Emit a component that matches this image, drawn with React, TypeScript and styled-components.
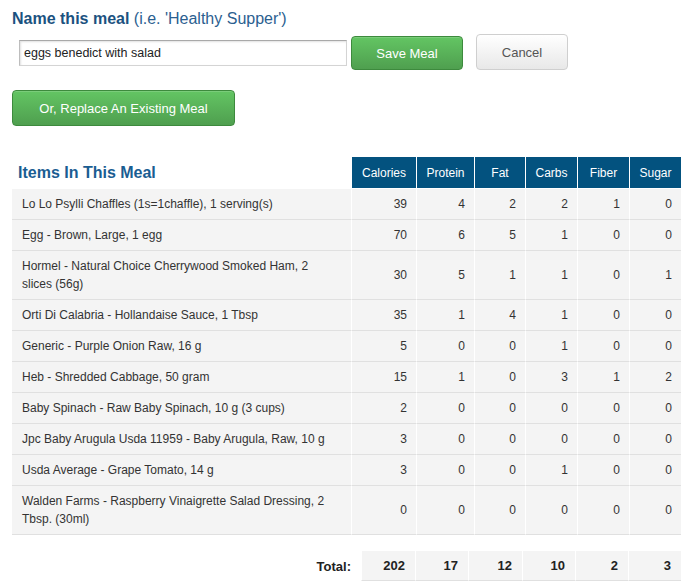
import React from "react";
import styled, { createGlobalStyle } from "styled-components";

const Global = createGlobalStyle`
  html, body { margin: 0; padding: 0; background: #fff; }
  body { font-family: "Liberation Sans", Arial, sans-serif; color: #333; }
`;

const Page = styled.div`
  padding: 9px 12px 0 12px;
  width: 669px;
`;

const Heading = styled.div`
  font-size: 16px;
  line-height: 20px;
  color: #1d5582;
`;

const Strong = styled.span`
  font-weight: bold;
  color: #1b5280;
`;

const Paren = styled.span`
  color: #2b6090;
`;

const FormRow = styled.div`
  display: flex;
  align-items: flex-end;
  margin-top: 5px;
  height: 36px;
`;

const NameInput = styled.input`
  box-sizing: border-box;
  width: 328px;
  height: 26px;
  margin: 0 4px 4px 7px;
  padding: 0 4px;
  border: 1px solid #d4d4d4;
  border-top-color: #a9a9a9;
  border-left-color: #bdbdbd;
  box-shadow: inset 1px 1px 2px rgba(0, 0, 0, 0.12);
  font-family: "Liberation Sans", Arial, sans-serif;
  font-size: 12.5px;
  color: #222;
  outline: none;
`;

const Button = styled.button<{ $variant: "green" | "plain"; $w: number; $h: number; $ml?: number }>`
  box-sizing: border-box;
  width: ${(p) => p.$w}px;
  height: ${(p) => p.$h}px;
  margin-left: ${(p) => p.$ml ?? 0}px;
  border-radius: 4px;
  font-family: "Liberation Sans", Arial, sans-serif;
  font-size: 13px;
  cursor: pointer;
  padding: 0;
  ${(p) =>
    p.$variant === "green"
      ? `
    color: #fff;
    background: linear-gradient(to bottom, #63c563, #4f9f4f);
    border: 1px solid #3d8a3d;
    box-shadow: inset 0 1px 0 rgba(255,255,255,0.15);
  `
      : `
    color: #555;
    background: linear-gradient(to bottom, #ffffff, #e8e8e8);
    border: 1px solid #cfcfcf;
  `}
`;

const ReplaceRow = styled.div`
  margin-top: 20px;
`;

const Table = styled.table`
  margin-top: 31px;
  width: 669px;
  border-collapse: separate;
  border-spacing: 0;
  table-layout: fixed;
  font-size: 12px;
  color: #333;
`;

const TitleCell = styled.th`
  text-align: left;
  padding: 7px 6px 6px;
  line-height: 18px;
  font-size: 16px;
  font-weight: bold;
  color: #1a5d92;
  background: #fff;
  border-bottom: 1px solid #fff;
  vertical-align: middle;
`;

const HeadCell = styled.th`
  padding: 7px 2px 6px;
  line-height: 18px;
  font-size: 12px;
  font-weight: normal;
  color: #fff;
  background: #03527f;
  border-left: 1px solid #fff;
  border-bottom: 1px solid #fff;
  text-align: center;
`;

const NameCell = styled.td`
  padding: 6px 10px;
  line-height: 18px;
  background: #f4f4f4;
  border-bottom: 1px solid #e0e0e0;
  color: #333;
`;

const NumCell = styled.td`
  padding: 6px 9px 6px 4px;
  line-height: 18px;
  background: #f4f4f4;
  border-bottom: 1px solid #e0e0e0;
  border-left: 1px solid #fff;
  text-align: right;
  vertical-align: middle;
  color: #333;
`;

const TotalTable = styled.table`
  margin-top: 16px;
  width: 669px;
  border-collapse: separate;
  border-spacing: 0;
  table-layout: fixed;
  font-size: 13px;
  font-weight: bold;
  color: #222;
`;

const TotalLabel = styled.td`
  text-align: right;
  padding: 6px 10px 5px 0;
  line-height: 18px;
  background: #fff;
`;

const TotalCell = styled.td`
  text-align: right;
  padding: 6px 10px 5px 4px;
  line-height: 18px;
  background: #f4f4f4;
  border-left: 1px solid #fff;
  border-bottom: 1px solid #e0e0e0;
`;

const items: [string, number, number, number, number, number, number][] = [
  ["Lo Lo Psylli Chaffles (1s=1chaffle), 1 serving(s)", 39, 4, 2, 2, 1, 0],
  ["Egg - Brown, Large, 1 egg", 70, 6, 5, 1, 0, 0],
  ["Hormel - Natural Choice Cherrywood Smoked Ham, 2 slices (56g)", 30, 5, 1, 1, 0, 1],
  ["Orti Di Calabria - Hollandaise Sauce, 1 Tbsp", 35, 1, 4, 1, 0, 0],
  ["Generic - Purple Onion Raw, 16 g", 5, 0, 0, 1, 0, 0],
  ["Heb - Shredded Cabbage, 50 gram", 15, 1, 0, 3, 1, 2],
  ["Baby Spinach - Raw Baby Spinach, 10 g (3 cups)", 2, 0, 0, 0, 0, 0],
  ["Jpc Baby Arugula Usda 11959 - Baby Arugula, Raw, 10 g", 3, 0, 0, 0, 0, 0],
  ["Usda Average - Grape Tomato, 14 g", 3, 0, 0, 1, 0, 0],
  ["Walden Farms - Raspberry Vinaigrette Salad Dressing, 2 Tbsp. (30ml)", 0, 0, 0, 0, 0, 0],
];

const heads = ["Calories", "Protein", "Fat", "Carbs", "Fiber", "Sugar"];
const widths = [339, 65, 58, 51, 52, 52, 52];
const totalWidths = [349, 54, 53, 54, 53, 53, 53];
const totals = [202, 17, 12, 10, 2, 3];

export default function App() {
  return (
    <>
      <Global />
      <Page>
        <Heading>
          <Strong>Name this meal</Strong> <Paren>(i.e. 'Healthy Supper')</Paren>
        </Heading>
        <FormRow>
          <NameInput defaultValue="eggs benedict with salad" />
          <Button $variant="green" $w={112} $h={34}>
            Save Meal
          </Button>
          <Button $variant="plain" $w={92} $h={36} $ml={13}>
            Cancel
          </Button>
        </FormRow>
        <ReplaceRow>
          <Button $variant="green" $w={223} $h={36}>
            Or, Replace An Existing Meal
          </Button>
        </ReplaceRow>
        <Table>
          <colgroup>
            {widths.map((w, i) => (
              <col key={i} style={{ width: w }} />
            ))}
          </colgroup>
          <thead>
            <tr>
              <TitleCell>Items In This Meal</TitleCell>
              {heads.map((h) => (
                <HeadCell key={h}>{h}</HeadCell>
              ))}
            </tr>
          </thead>
          <tbody>
            {items.map(([name, ...vals]) => (
              <tr key={name}>
                <NameCell>{name}</NameCell>
                {vals.map((v, i) => (
                  <NumCell key={i}>{v}</NumCell>
                ))}
              </tr>
            ))}
          </tbody>
        </Table>
        <TotalTable>
          <colgroup>
            {totalWidths.map((w, i) => (
              <col key={i} style={{ width: w }} />
            ))}
          </colgroup>
          <tbody>
            <tr>
              <TotalLabel>Total:</TotalLabel>
              {totals.map((t, i) => (
                <TotalCell key={i}>{t}</TotalCell>
              ))}
            </tr>
          </tbody>
        </TotalTable>
      </Page>
    </>
  );
}
